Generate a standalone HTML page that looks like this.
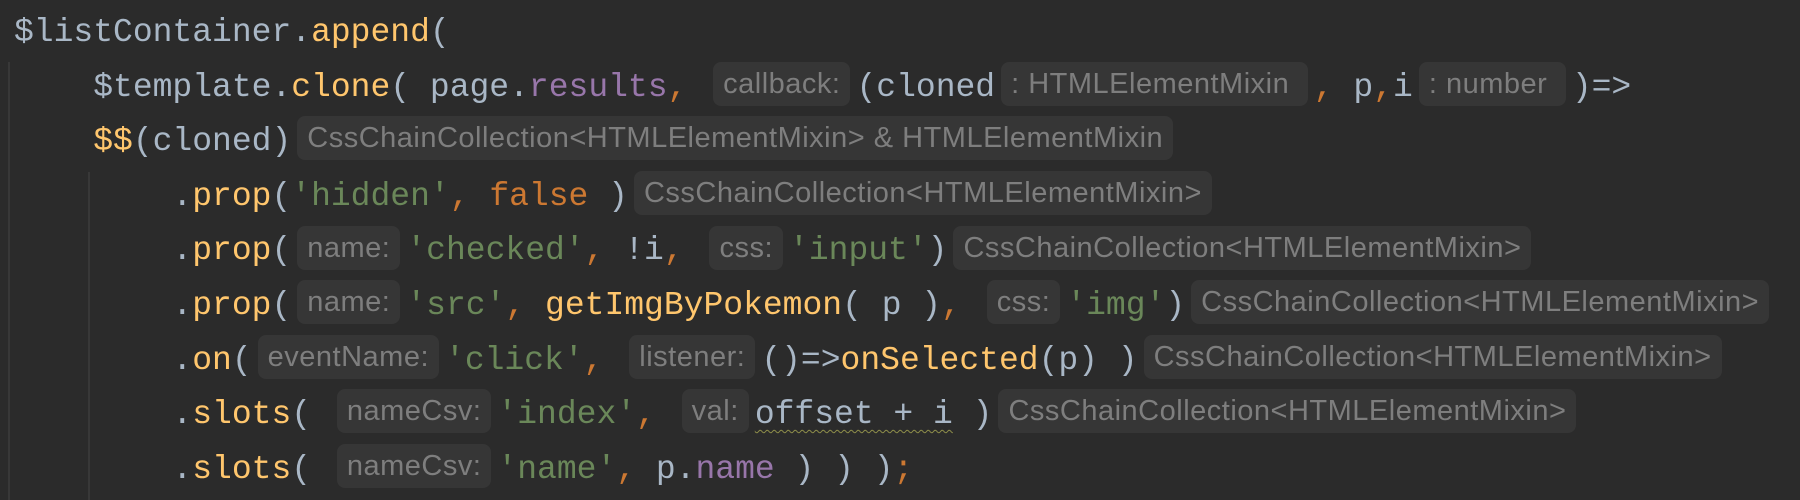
<!DOCTYPE html>
<html><head><meta charset="utf-8"><style>
html,body{margin:0;padding:0;background:#2b2b2b;width:1800px;height:500px;overflow:hidden}
.ed{position:relative;width:1800px;height:500px;font-family:"Liberation Mono",monospace;font-size:33px;color:#a9b7c6}
.l{position:absolute;left:14px;height:54.6px;line-height:54.6px;white-space:pre}
.y{color:#ffc66d}.p{color:#9876aa}.g{color:#6a8759}.o{color:#cc7832}
.h{display:inline-block;height:44px;line-height:44px;vertical-align:middle;padding:0 10px;margin:0 6px;border-radius:8px;background:#363636;color:#7e7e7e;font-family:"Liberation Sans",sans-serif;font-size:29px;letter-spacing:0.5px;position:relative;top:-3px}
.guide{position:absolute;width:2px;background:#383838}
.w{text-decoration:underline wavy #8f8f4a;text-decoration-thickness:1px;text-underline-offset:6px}
</style></head><body><div class="ed">
<div class="guide" style="left:8px;top:62px;height:438px"></div>
<div class="guide" style="left:88px;top:172px;height:328px"></div>
<div class="l" style="top:6px">$listContainer.<span class="y">append</span>(</div>
<div class="l" style="top:60.6px">    $template.<span class="y">clone</span>( page.<span class="p">results</span><span class="o">,</span> <span class="h">callback:</span>(cloned<span class="h">: HTMLElementMixin </span><span class="o">,</span> p<span class="o">,</span>i<span class="h">: number </span>)=&gt;</div>
<div class="l" style="top:115.2px">    <span class="y">$$</span>(cloned)<span class="h">CssChainCollection&lt;HTMLElementMixin&gt; &amp; HTMLElementMixin</span></div>
<div class="l" style="top:169.8px">        .<span class="y">prop</span>(<span class="g">'hidden'</span><span class="o">,</span> <span class="o">false</span> )<span class="h">CssChainCollection&lt;HTMLElementMixin&gt;</span></div>
<div class="l" style="top:224.4px">        .<span class="y">prop</span>(<span class="h">name:</span><span class="g">'checked'</span><span class="o">,</span> !i<span class="o">,</span> <span class="h">css:</span><span class="g">'input'</span>)<span class="h">CssChainCollection&lt;HTMLElementMixin&gt;</span></div>
<div class="l" style="top:279px">        .<span class="y">prop</span>(<span class="h">name:</span><span class="g">'src'</span><span class="o">,</span> <span class="y">getImgByPokemon</span>( p )<span class="o">,</span> <span class="h">css:</span><span class="g">'img'</span>)<span class="h">CssChainCollection&lt;HTMLElementMixin&gt;</span></div>
<div class="l" style="top:333.6px">        .<span class="y">on</span>(<span class="h">eventName:</span><span class="g">'click'</span><span class="o">,</span> <span class="h">listener:</span>()=&gt;<span class="y">onSelected</span>(p) )<span class="h">CssChainCollection&lt;HTMLElementMixin&gt;</span></div>
<div class="l" style="top:388.2px">        .<span class="y">slots</span>( <span class="h">nameCsv:</span><span class="g">'index'</span><span class="o">,</span> <span class="h">val:</span><span class="w">offset + i</span> )<span class="h">CssChainCollection&lt;HTMLElementMixin&gt;</span></div>
<div class="l" style="top:442.8px">        .<span class="y">slots</span>( <span class="h">nameCsv:</span><span class="g">'name'</span><span class="o">,</span> p.<span class="p">name</span> ) ) )<span class="o">;</span></div>
</div></body></html>
